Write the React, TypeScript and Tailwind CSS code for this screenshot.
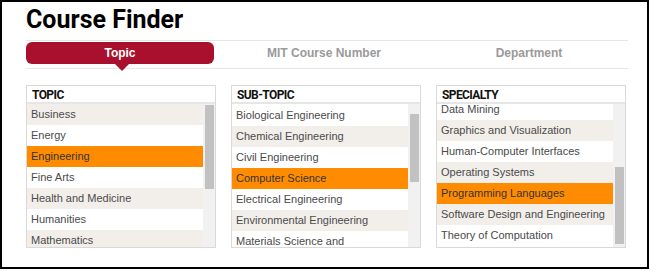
import React from "react";

type PanelProps = {
  title: string;
  items: string[];
  selected: string;
  firstStriped: boolean;
  offset: number;
  thumbTop: number;
  thumbHeight: number;
};

const RED = "#a9102d";

function ListPanel({ title, items, selected, firstStriped, offset, thumbTop, thumbHeight }: PanelProps) {
  return (
    <div className="w-[190px] h-[163px] border border-[#d9d9d9] bg-white flex flex-col">
      <div
        className="h-[18px] pl-[5px] border-b-2 border-[#e6e6e6] text-[12px] leading-[18px] font-bold tracking-[-0.6px] text-[#111]"
        style={{ fontFamily: "Roboto, 'Liberation Sans', sans-serif" }}
      >
        {title}
      </div>
      <div className="flex flex-1 min-h-0">
        <div className="flex-1 overflow-hidden">
          <ul style={{ marginTop: offset }}>
            {items.map((item, i) => {
              const striped = (i % 2 === 0) === firstStriped;
              const bg =
                item === selected
                  ? "bg-[#ff8c00] text-[#333]"
                  : striped
                  ? "bg-[#f2efeb] text-[#4a4a4a]"
                  : "bg-white text-[#4a4a4a]";
              return (
                <li key={item} className={`min-h-[21px] pl-[4px] pr-[8px] text-[11px] leading-[21px] ${bg}`}>
                  {item}
                </li>
              );
            })}
          </ul>
        </div>
        <div className="w-[12px] bg-[#f1f1f1] pl-[2px] pr-px">
          <div className="bg-[#c1c1c1]" style={{ marginTop: thumbTop, height: thumbHeight }} />
        </div>
      </div>
    </div>
  );
}

export default function App() {
  return (
    <div className="w-[650px] h-[271px] bg-white" style={{ fontFamily: "'Liberation Sans', Arial, sans-serif" }}>
      <div className="w-[649px] h-[269px] border-2 border-black bg-white pl-[24px]">
        <h1
          className="mt-[3px] h-[30px] text-[25px] leading-[30px] font-bold text-black"
          style={{ fontFamily: "Roboto, 'Liberation Sans', sans-serif" }}
        >
          Course Finder
        </h1>
        <div className="mt-[5px] w-[602px] h-[29px] border-y border-[#e6e6e6] pt-px flex">
          <div className="relative w-[188px] h-[22px] rounded-[6px] bg-[#a9102d] text-white text-[12px] font-bold leading-[22px] text-center">
            Topic
            <div
              className="absolute top-full left-[89px] w-0 h-0 border-l-[7px] border-r-[7px] border-t-[7px] border-l-transparent border-r-transparent"
              style={{ borderTopColor: RED }}
            />
          </div>
          <div className="w-[220px] h-[22px] text-[12px] font-bold leading-[22px] text-center text-[#9a9a9a]">
            MIT Course Number
          </div>
          <div className="w-[190px] h-[22px] text-[12px] font-bold leading-[22px] text-center text-[#9a9a9a]">
            Department
          </div>
        </div>
        <div className="mt-[16px] flex gap-[15px]">
          <ListPanel
            title="TOPIC"
            items={["Business", "Energy", "Engineering", "Fine Arts", "Health and Medicine", "Humanities", "Mathematics"]}
            selected="Engineering"
            firstStriped={true}
            offset={0}
            thumbTop={1}
            thumbHeight={84}
          />
          <ListPanel
            title="SUB-TOPIC"
            items={[
              "Biological Engineering",
              "Chemical Engineering",
              "Civil Engineering",
              "Computer Science",
              "Electrical Engineering",
              "Environmental Engineering",
              "Materials Science and Engineering",
            ]}
            selected="Computer Science"
            firstStriped={false}
            offset={1}
            thumbTop={10}
            thumbHeight={68}
          />
          <ListPanel
            title="SPECIALTY"
            items={[
              "Data Mining",
              "Graphics and Visualization",
              "Human-Computer Interfaces",
              "Operating Systems",
              "Programming Languages",
              "Software Design and Engineering",
              "Theory of Computation",
            ]}
            selected="Programming Languages"
            firstStriped={false}
            offset={-5}
            thumbTop={63}
            thumbHeight={77}
          />
        </div>
      </div>
    </div>
  );
}
